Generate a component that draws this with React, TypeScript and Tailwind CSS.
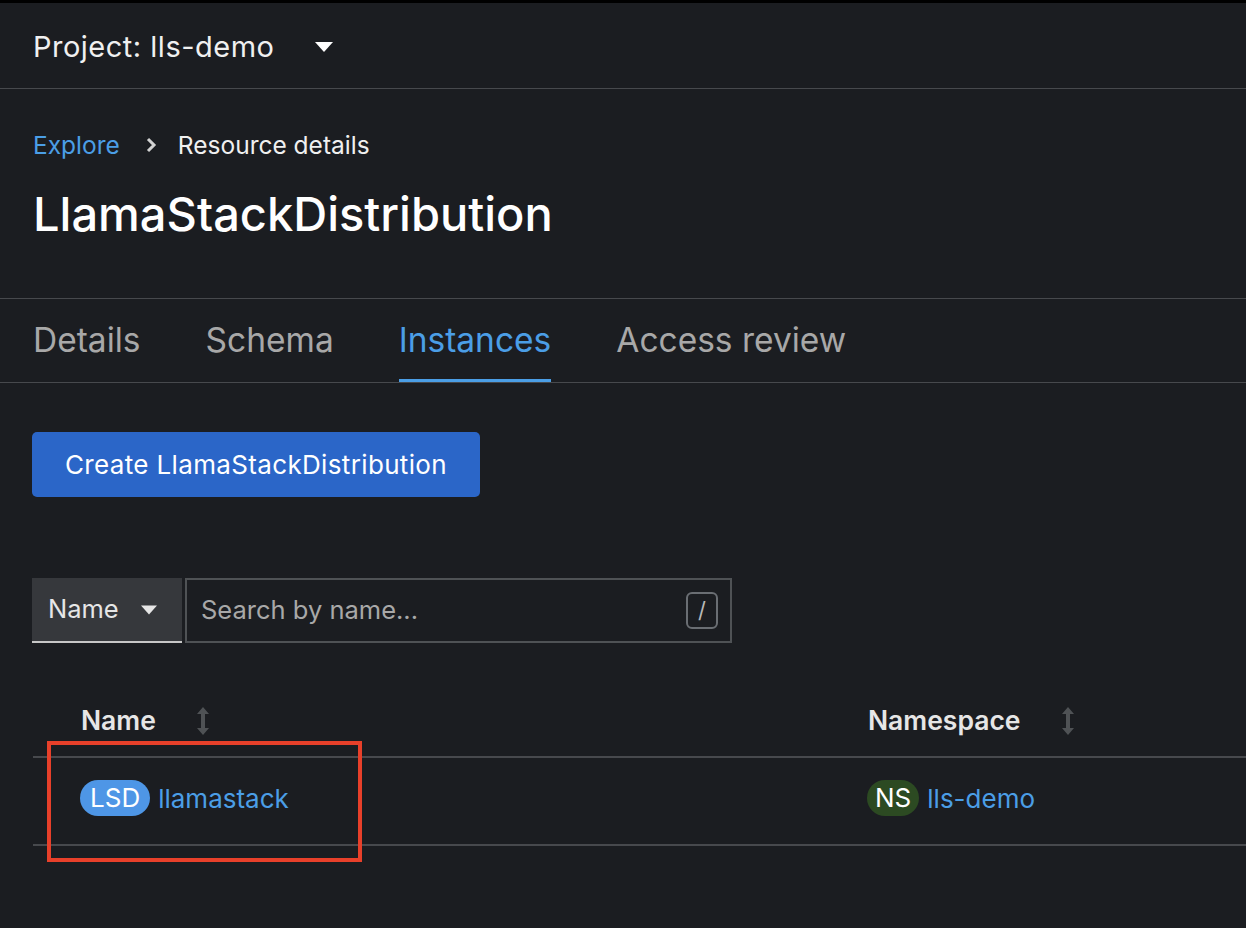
import React from 'react';

const FONT = { fontFamily: 'Inter, "Open Sans", sans-serif' };

const SortIcon: React.FC = () => (
  <svg width="12" height="28" viewBox="0 0 12 28" className="text-[#4f5255]" fill="currentColor">
    <path d="M6 0 L12 7 H8 V21 H12 L6 28 L0 21 H4 V7 H0 Z" />
  </svg>
);

const Caret: React.FC<{ className?: string }> = ({ className }) => (
  <svg width="18" height="10" viewBox="0 0 18 10" className={className} fill="currentColor">
    <path d="M0 0 H18 L9 10 Z" />
  </svg>
);

const TABS = ['Details', 'Schema', 'Instances', 'Access review'];

export default function App() {
  return (
    <div className="relative w-[1246px] h-[928px] overflow-hidden bg-[#1b1d21] text-white" style={FONT}>
      <div className="h-[3px] bg-black" />

      {/* project selector */}
      <div className="h-[86px] flex items-center pl-[33px] pt-[3px] border-b border-[#47494d]">
        <span className="text-[29px] tracking-[0.5px] text-[#f0f0f0]">Project: lls-demo</span>
        <Caret className="ml-[40px] text-white" />
      </div>

      {/* breadcrumb + title */}
      <div className="pl-[33px] pt-[38px] h-[210px] border-b border-[#47494d]">
        <div className="flex items-center text-[24.5px] h-[36px]">
          <span className="text-[#4b9ee6]">Explore</span>
          <svg width="12" height="16" viewBox="0 0 12 16" className="ml-[25px] mr-[21px] text-[#d2d2d2]">
            <path d="M3 2 L9 8 L3 14" stroke="currentColor" strokeWidth="3" fill="none" />
          </svg>
          <span className="text-[#f0f0f0]">Resource details</span>
        </div>
        <h1 className="mt-[22px] text-[47px] font-medium leading-[58px]">LlamaStackDistribution</h1>
      </div>

      {/* tabs */}
      <div className="flex pl-[33px] gap-[65px] h-[84px] border-b border-[#47494d]">
        {TABS.map((t) => (
          <div
            key={t}
            className={`flex items-center pt-[3px] text-[33.5px] border-b-[3px] ${
              t === 'Instances' ? 'text-[#4b9ee6] border-[#4b9ee6]' : 'text-[#a8a8a8] border-transparent'
            }`}
          >
            {t}
          </div>
        ))}
      </div>

      <div className="pl-[32px] pt-[49px]">
        <button className="h-[65px] w-[448px] rounded-[5px] bg-[#2b66c8] text-[26px] tracking-[0.35px] text-white">
          Create LlamaStackDistribution
        </button>

        {/* filter toolbar */}
        <div className="mt-[81px] flex h-[65px]">
          <div className="w-[150px] bg-[#36383c] border-b-2 border-[#c7c7c7] flex items-center pl-[16px] gap-[22px]">
            <span className="text-[25.5px] text-[#e6e6e6]">Name</span>
            <Caret className="text-[#e6e6e6] w-[16px]" />
          </div>
          <div className="ml-[3px] w-[547px] border-2 border-[#4f5255] flex items-center pl-[14px] pr-[12px]">
            <span className="flex-1 text-[25.5px] text-[#a8a8a8]">Search by name...</span>
            <span className="w-[32px] h-[37px] rounded-[6px] border-2 border-[#6a6e73] flex items-center justify-center text-[22px] text-[#b8b8b8]">
              /
            </span>
          </div>
        </div>
      </div>

      {/* table */}
      <div className="mt-[42px] ml-[33px]">
        <div className="flex items-center h-[73px] border-b-2 border-[#47494d] text-[26.5px] font-semibold text-[#e6e6e6]">
          <div className="w-[835px] pl-[48px] flex items-center gap-[41px]">
            Name <SortIcon />
          </div>
          <div className="flex items-center gap-[41px]">
            Namespace <SortIcon />
          </div>
        </div>
        <div className="flex items-center h-[88px] pb-[6px] border-b-2 border-[#47494d] text-[26px]">
          <div className="w-[834px] pl-[47px] flex items-center gap-[8px]">
            <span className="h-[36px] px-[10px] rounded-full bg-[#4e96e6] text-white flex items-center leading-none">LSD</span>
            <span className="text-[#4b9ee6]">llamastack</span>
          </div>
          <div className="flex items-center gap-[8px]">
            <span className="h-[36px] px-[8px] rounded-full bg-[#2c4a22] text-white flex items-center leading-none">NS</span>
            <span className="text-[#4b9ee6]">lls-demo</span>
          </div>
        </div>
      </div>

      {/* annotation box */}
      <div className="absolute left-[47px] top-[741px] w-[315px] h-[121px] border-4 border-[#e8402a]" />
    </div>
  );
}
